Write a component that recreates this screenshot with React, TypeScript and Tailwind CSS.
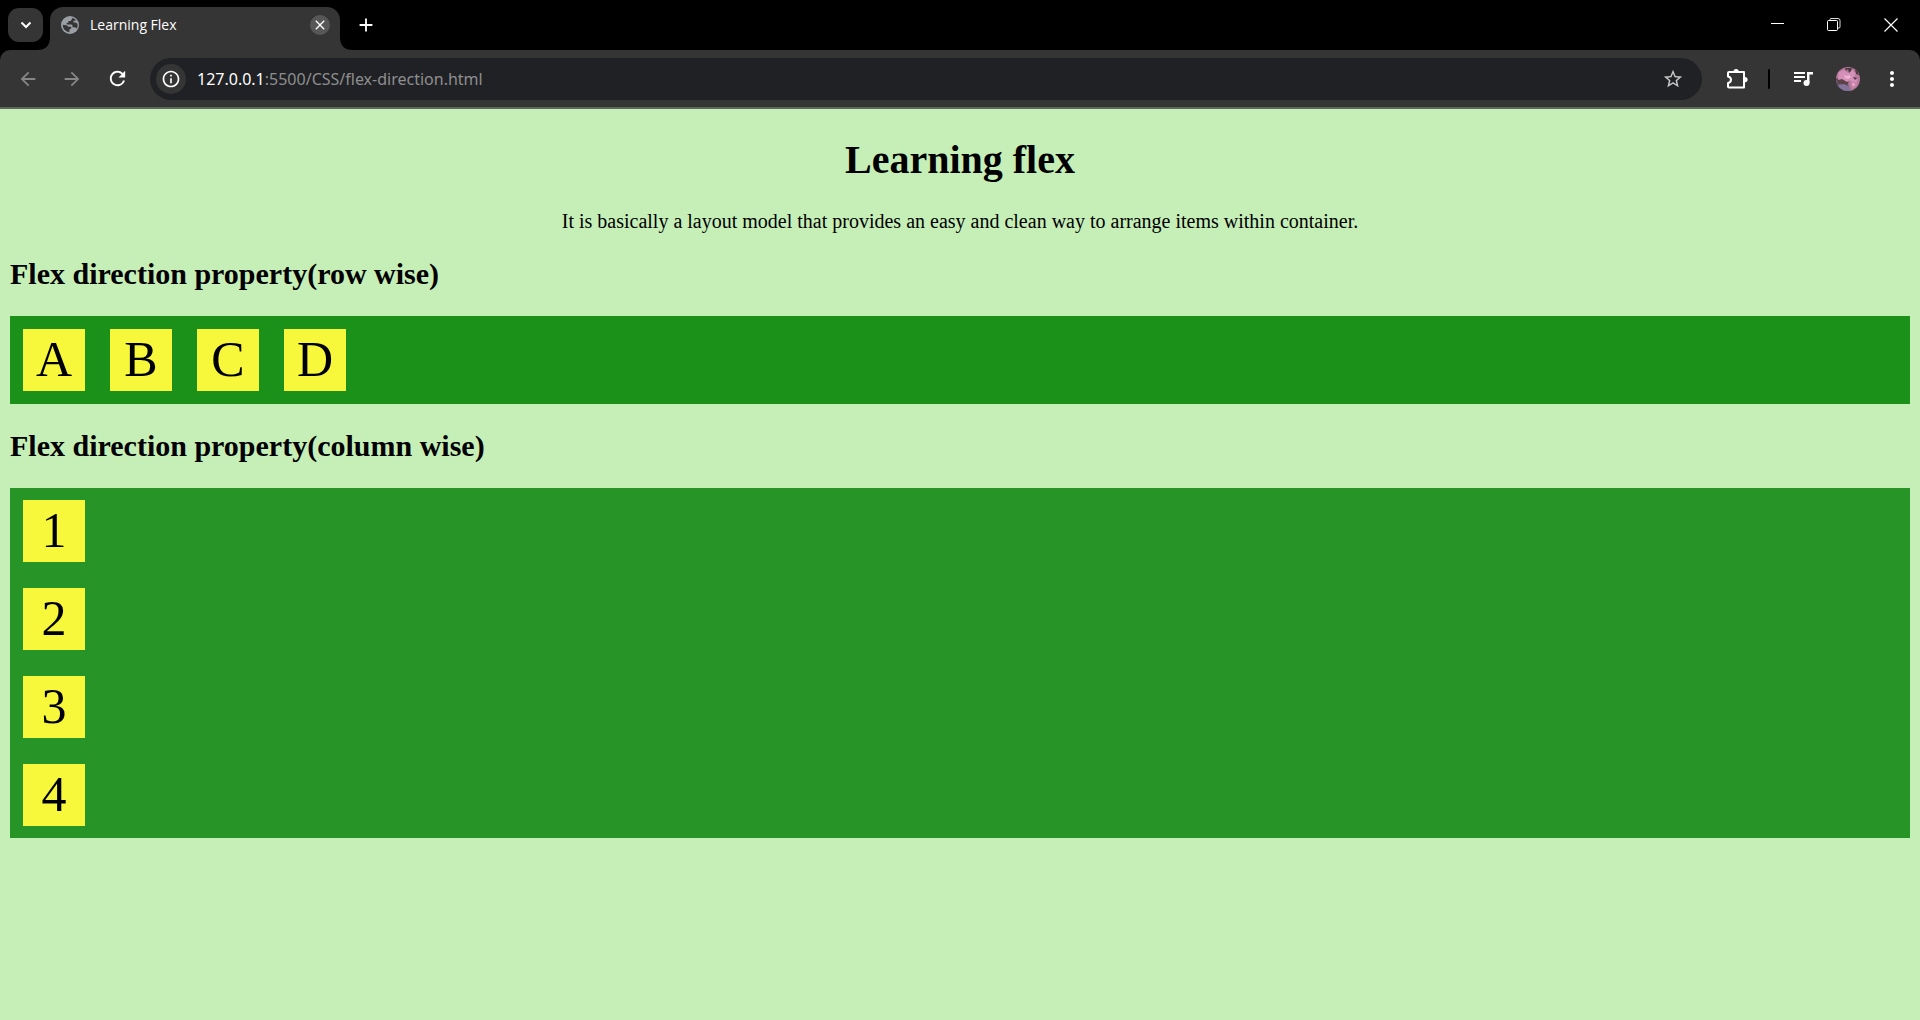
import React from "react";
import { MdArrowBack, MdArrowForward, MdRefresh, MdInfoOutline, MdStarBorder, MdMoreVert, MdClose, MdAdd } from "react-icons/md";

const rowItems = ["A", "B", "C", "D"];
const columnItems = ["1", "2", "3", "4"];

function Box({ children }: { children: React.ReactNode }) {
  return (
    <div className="size-[62px] bg-[#f7f73b] text-center text-[50px] leading-[60px]">
      {children}
    </div>
  );
}

function WindowControls() {
  return (
    <div className="ml-auto flex items-stretch self-stretch text-white">
      <button aria-label="Minimize" className="flex w-14 items-center justify-center">
        <svg width="14" height="14" viewBox="0 0 14 14" stroke="currentColor" fill="none">
          <path d="M0 5.500h13" />
        </svg>
      </button>
      <button aria-label="Restore" className="flex w-14 items-center justify-center">
        <svg width="14" height="14" viewBox="0 0 14 14" stroke="currentColor" fill="none">
          <rect x="0.500" y="2.500" width="10" height="10" rx="1" />
          <path d="M3 2.500V1.500q0-1 1-1h7q2 0 2 2V9q0 1-1 1h-1.500" strokeOpacity="0.85" />
        </svg>
      </button>
      <button aria-label="Close window" className="flex w-[58px] items-center justify-center">
        <svg width="14" height="14" viewBox="0 0 14 14" stroke="currentColor" strokeWidth="1.2" fill="none">
          <path d="M0.500 0.500l13 13M13.500 0.500l-13 13" />
        </svg>
      </button>
    </div>
  );
}

function Globe() {
  return (
    <svg width="18" height="18" viewBox="0 0 18 18">
      <circle cx="9" cy="9" r="9" fill="#9aa0a6" />
      <path
        d="M11.200 2.100L10.500 4q-.3 1-1.500 1H7.500v1.700H5.700v1.800h4.600q1.200 0 1.200 1.200v1.600h1.200q2.200 0 3.200 1.200 1.200-2 .6-4.500-.6-1.500-2.200-1.500h-1.800V4.800h1.700l.7-.8q-1.500-1.500-3.500-1.900zM1.700 8.800q0 3 2 5.200 2 2 4.700 2.200v-2.400q0-1 1-1h.8v-2H7.500L5.600 9.200z"
        fill="#353535"
      />
    </svg>
  );
}

function TabBar() {
  return (
    <div className="flex h-[50px] items-center bg-black pl-2">
      <button aria-label="Search tabs" className="flex h-[34px] w-[35px] items-center justify-center rounded-[11px] bg-[#353535] text-white">
        <svg width="12" height="8" viewBox="0 0 12 8" fill="none" stroke="currentColor" strokeWidth="2">
          <path d="M1.500 1.500L6 6l4.500-4.500" />
        </svg>
      </button>
      <div className="flex self-stretch pt-[7px]">
        <div className="flex w-[7px] items-end">
          <svg width="7" height="13" viewBox="0 0 7 13" className="overflow-visible" fill="#353535">
            <path d="M7 0V13H-6Q7 13 7 0Z" />
          </svg>
        </div>
        <div className="flex w-[290px] items-center rounded-t-[13px] bg-[#353535] pr-[10px] pb-[7px] pl-[11px]">
          <Globe />
          <span className="ml-[11px] flex-1 font-['Open_Sans',sans-serif] text-sm text-white">Learning Flex</span>
          <button aria-label="Close tab" className="flex size-5 items-center justify-center rounded-full bg-[#575757] text-white">
            <MdClose className="size-4" />
          </button>
        </div>
        <div className="flex w-[13px] items-end">
          <svg width="13" height="13" viewBox="0 0 13 13" fill="#353535">
            <path d="M0 0V13H13Q0 13 0 0Z" />
          </svg>
        </div>
      </div>
      <button aria-label="New tab" className="flex size-[26px] items-center justify-center text-white">
        <MdAdd className="size-[22px]" />
      </button>
      <WindowControls />
    </div>
  );
}

function Avatar() {
  return (
    <svg width="24" height="24" viewBox="0 0 24 24">
      <clipPath id="avatar">
        <circle cx="12" cy="12" r="12" />
      </clipPath>
      <g clipPath="url(#avatar)">
        <rect width="24" height="24" fill="#b87a9c" />
        <path d="M0 11l7 2 5 3 2 8H0z" fill="#5f5064" />
        <path d="M1 12l6-1 6 4-3 3-8-2z" fill="#5b4246" />
        <path d="M2 18l6-1 6 3 1 4H4z" fill="#84739a" />
        <path d="M3 5l5-2 4 3 4-3 4 3-2 5 4 2-4 3-4-3-3 2-5-3-4 1z" fill="#d490b8" />
        <path d="M14 14l4 1 4-1-2 6-4 1z" fill="#c985ab" />
        <path d="M9 1l1 3 2-2 1 4 2-2 1-3zM19 3l1 4 3 1-2-5zM17 10l4 1-2 2z" fill="#4a3a44" />
        <path d="M8 8l3 1 2-1 2 2-3 2-3-1zM16 17l2-1 1 2-2 1z" fill="#eeb4d2" />
      </g>
    </svg>
  );
}

function Toolbar() {
  return (
    <div className="bg-black">
      <div className="flex h-[59px] items-center rounded-t-[10px] border-b-2 border-[#5f665c] bg-[#353535] text-white">
        <button aria-label="Back" className="ml-4 flex size-6 items-center justify-center text-[#868686]">
          <MdArrowBack className="size-[22px]" />
        </button>
        <button aria-label="Forward" className="ml-5 flex size-6 items-center justify-center text-[#868686]">
          <MdArrowForward className="size-[22px]" />
        </button>
        <button aria-label="Reload" className="ml-[21px] flex size-6 items-center justify-center">
          <MdRefresh className="size-[23px]" />
        </button>
        <div className="ml-[21px] flex h-[42px] flex-1 items-center rounded-full bg-[#202124] pr-[18px] pl-[6px]">
          <button aria-label="View site information" className="flex size-[30px] items-center justify-center rounded-full bg-[#353535]">
            <MdInfoOutline className="size-5" />
          </button>
          <a href="http://127.0.0.1:5500/CSS/flex-direction.html" className="ml-[11px] flex-1 pt-px font-['Noto_Sans',sans-serif] text-base text-[#8e8e90]">
            <span className="text-white">127.0.0.1</span>:5500/CSS/flex-direction.html
          </a>
          <button aria-label="Bookmark this tab" className="text-[#c7c7c7]">
            <MdStarBorder className="size-[22px]" />
          </button>
        </div>
        <button aria-label="Extensions" className="ml-6">
          <svg width="22" height="22" viewBox="0 0 22 22">
            <path d="M3 4h15v15.500H3q-1 0-1-1V15q3-0.500 3-3.200T2 8.500V5q0-1 1-1z" fill="none" stroke="currentColor" strokeWidth="2" strokeLinejoin="round" />
            <path d="M7.500 3.500a2.600 2.600 0 0 1 5.200 0zM19 9a2.600 2.600 0 0 1 0 5.200z" fill="currentColor" />
          </svg>
        </button>
        <span className="ml-5 h-5 w-[2px] rounded-full bg-black" />
        <button aria-label="Media controls" className="ml-6">
          <svg width="20" height="16" viewBox="0 0 20 16" fill="currentColor">
            <path d="M0 1h11v2H0zM0 5h11v2H0zM0 9h7v2H0zM13 1h6v2.500h-3.500V12h-2.500z" />
            <circle cx="12.500" cy="12" r="3" />
          </svg>
        </button>
        <button aria-label="Profile" className="ml-[22px]">
          <Avatar />
        </button>
        <button aria-label="Menu" className="mr-4 ml-5">
          <MdMoreVert className="size-6" />
        </button>
      </div>
    </div>
  );
}

function Heading({ children }: { children: React.ReactNode }) {
  return <h2 className="my-[25px] text-[30px] leading-[34px] font-bold">{children}</h2>;
}

export default function App() {
  return (
    <div className="flex min-h-screen flex-col bg-[#c6efb8]">
      <header>
        <TabBar />
        <Toolbar />
      </header>
      <main className="px-[10px] pt-7 font-['Liberation_Serif',serif] text-black">
        <h1 className="text-center text-[40px] leading-[46px] font-bold">Learning flex</h1>
        <p className="mt-[27px] -mb-px text-center text-xl leading-[23px]">
          It is basically a layout model that provides an easy and clean way to arrange items within container.
        </p>
        <Heading>Flex direction property(row wise)</Heading>
        <section className="flex gap-[25px] bg-[#1b9119] p-[13px]">
          {rowItems.map((item) => (
            <Box key={item}>{item}</Box>
          ))}
        </section>
        <Heading>Flex direction property(column wise)</Heading>
        <section className="flex flex-col gap-[26px] bg-[#269427] px-[13px] py-3">
          {columnItems.map((item) => (
            <Box key={item}>{item}</Box>
          ))}
        </section>
      </main>
    </div>
  );
}
